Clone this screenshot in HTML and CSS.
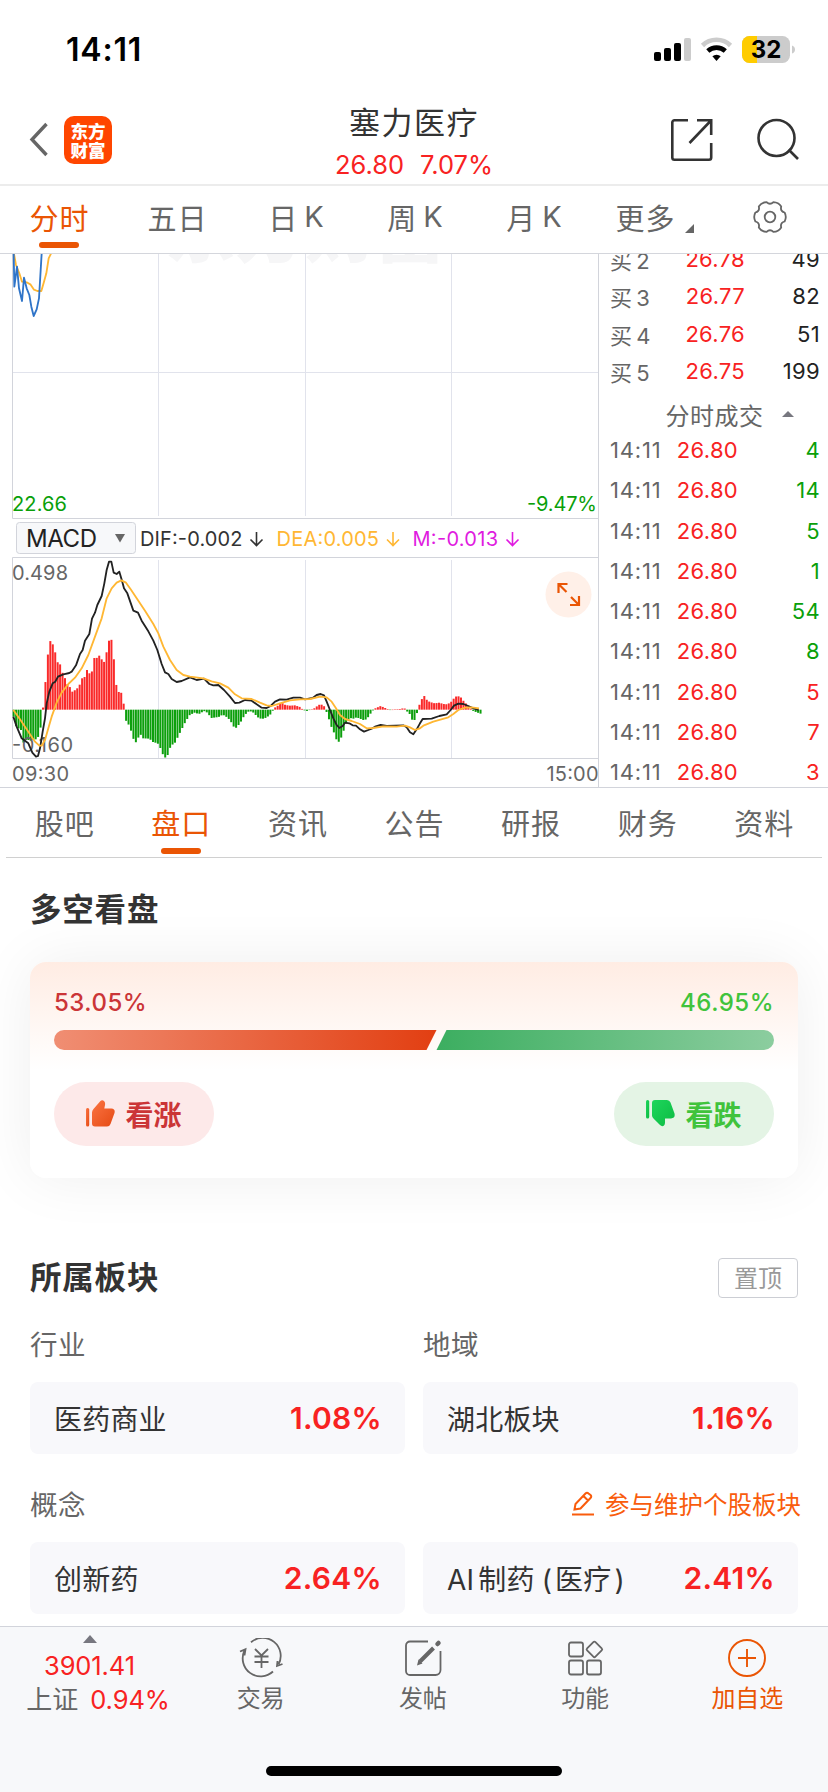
FILE: index.html
```html
<!DOCTYPE html>
<html lang="zh-CN">
<head>
<meta charset="utf-8">
<title>塞力医疗</title>
<link rel="stylesheet" href="styles.css">
</head>
<body>
<div class="screen">
  <div class="status">
    <span class="clock">14:11</span>
    <svg class="status-icons" width="146" height="30" viewBox="0 0 146 30">
      <rect x="1" y="16" width="7" height="9" rx="2"/><rect x="11" y="12" width="7" height="13" rx="2"/><rect x="21" y="7" width="7" height="18" rx="2"/><rect x="31" y="2" width="7" height="23" rx="2" fill="#ccc"/>
      <path d="M49.500 9.500a20 20 0 0 1 28 0" fill="none" stroke="#ccc" stroke-width="4.600"/>
      <path d="M54.800 15a13 13 0 0 1 17.500 0" fill="none" stroke="#000" stroke-width="4.600"/>
      <path d="M59.400 20.300a6 6 0 0 1 8.300 0L63.500 25z"/>
      <clipPath id="batt"><rect x="89" y="0" width="48" height="27" rx="7.500"/></clipPath>
      <g clip-path="url(#batt)"><rect x="89" width="48" height="27" fill="#ccc"/><rect x="89" width="15" height="27" fill="#fc0"/></g>
      <path d="M139 9.500q3 1 3 4t-3 4z" fill="#ccc"/>
      <text class="batt-text" x="113" y="22" text-anchor="middle">32</text>
    </svg>
  </div>

  <header class="header">
    <div class="head-left">
      <svg width="20" height="36" viewBox="0 0 20 36"><path d="M18.500 2 4 17.500 18.500 33" fill="none" stroke="#666" stroke-width="3.400"/></svg>
      <div class="logo"><span>东方</span><span>财富</span></div>
    </div>
    <div class="head-mid">
      <div class="name">塞力医疗</div>
      <div class="quote"><span>26.80</span><span>7.07%</span></div>
    </div>
    <div class="head-right">
      <svg width="44" height="44" viewBox="0 0 44 44" fill="none" stroke="#333" stroke-width="2.600"><path d="M18 2.300H4.500a2.200 2.200 0 0 0-2.200 2.200v35a2.200 2.200 0 0 0 2.200 2.200h34.500a2.200 2.200 0 0 0 2.200-2.200V25M27 2.300h14.200V17M41 2.500 19.500 25"/></svg>
      <svg width="44" height="44" viewBox="0 0 44 44" fill="none" stroke="#333" stroke-width="2.600"><circle cx="20.500" cy="20" r="18"/><path d="m32.500 31.500 9.500 9.500"/></svg>
    </div>
  </header>

  <nav class="periods">
    <span class="tab active">分时</span><span class="tab">五日</span><span class="tab">日<i>K</i></span><span class="tab">周<i>K</i></span><span class="tab">月<i>K</i></span>
    <span class="tab more">更多<svg width="9" height="9" viewBox="0 0 9 9"><path d="M9 0v9H0z" fill="#666"/></svg></span>
    <span class="tab gear"><svg width="34" height="34" viewBox="-17 -17 34 34" fill="none" stroke="#666" stroke-width="1.800" stroke-linejoin="round"><circle r="5.300"/><path d="M14.600-4.500Q17 0 14.600 4.500 10 5.750 11.200 10.400 8.500 14.700 3.400 14.900 0 11.500-3.400 14.900-8.500 14.700-11.200 10.400-10 5.750-14.600 4.500-17 0-14.600-4.500-10-5.750-11.200-10.400-8.500-14.700-3.400-14.900 0-11.500 3.400-14.900 8.500-14.700 11.200-10.400 10-5.750 14.600-4.500Z"/></svg></span>
  </nav>

  <section class="market">
    <div class="chart">
      <svg width="599" height="533" viewBox="0 254 599 533">
        <clipPath id="wm"><rect x="160" y="254" width="290" height="10"/></clipPath>
        <text class="watermark" x="165" y="257" textLength="280" clip-path="url(#wm)">东方财富</text>
        <path d="M158.500 254v262M305.500 254v262M451.500 254v262M13 372.500h585M158.500 560v198M305.500 560v198M451.500 560v198" stroke="#e1e3ec" fill="none"/>
        <path d="M12.500 254v264.500H598.500M12.500 758.500V557.500H598.500M12.500 758.500H598.500" stroke="#d2d4db" fill="none"/>
        <g transform="translate(0 240) scale(.33333)" fill="none" stroke-width="5.500" stroke-linejoin="round">
          <polyline stroke="#ffb733" points="42,42 48,75 58,100 66,125 80,127 92,134 102,149 112,153 124,153 132,125 139,100 146,55 153,41"/>
          <polyline stroke="#2f74c8" points="41,40 43,140 51,80 57,145 66,183 72,113 80,145 88,165 94,200 101,228 110,208 117,175 125,40"/>
        </g>
        <text class="label green" x="12" y="511" textLength="55">22.66</text>
        <text class="label green" x="527" y="511" textLength="70">-9.47%</text>

        <rect x="16.500" y="522.500" width="119" height="31" rx="3" fill="#f7f8fa" stroke="#d2d4db"/>
        <text class="macd" x="26" y="547" textLength="71">MACD</text>
        <path d="M115 534h10l-5 8.500z" fill="#666"/>
        <text class="label dark" x="140" y="546" textLength="102.500">DIF:-0.002</text>
        <text class="label amber" x="276.500" y="546" textLength="102.500">DEA:0.005</text>
        <text class="label violet" x="412.500" y="546" textLength="85.500">M:-0.013</text>
        <g fill="none" stroke-width="1.600">
          <path d="M256.500 532v13.500M250.500 539.500l6 6 6-6" stroke="#333"/>
          <path d="M393 532v13.500M387 539.500l6 6 6-6" stroke="#ffb733"/>
          <path d="M512.500 532v13.500M506.500 539.500l6 6 6-6" stroke="#e01be0"/>
        </g>

        <g id="bars"></g>
        <text class="label grey" x="12" y="580" textLength="56">0.498</text>
        <text class="label grey" x="12" y="752" textLength="61">-0.160</text>
        <g transform="translate(0 510) scale(.33333)" fill="none" stroke-width="5.500" stroke-linejoin="round">
          <polyline stroke="#222" points="40,620 50,650 65,685 85,700 97,728 108,740 114,738 120,715 128,665 135,625 140,580 148,545 158,520 166,515 174,500 190,493 208,489 215,485 228,466 240,432 248,420 255,392 268,372 276,326 285,308 292,285 305,258 313,220 320,180 327,155 334,155 341,188 350,192 358,185 366,212 372,235 382,250 400,302 414,308 425,332 445,364 460,392 472,420 485,462 495,487 505,492 515,507 530,516 545,513 570,502 590,510 612,506 628,522 640,526 655,525 672,540 690,560 705,579 718,578 735,570 755,572 770,583 785,593 800,594 812,588 825,575 840,568 860,569 880,563 900,563 915,568 938,564 950,555 962,552 972,556 980,575 990,600 1000,625 1010,645 1018,654 1028,648 1035,638 1048,640 1058,646 1068,647 1080,658 1092,665 1105,660 1115,656 1125,650 1142,645 1160,648 1210,646 1220,652 1230,667 1240,673 1250,658 1260,640 1268,627 1295,626 1318,618 1340,613 1352,600 1362,587 1375,581 1390,582 1405,588 1420,595 1436,600"/>
          <polyline stroke="#ffb733" points="40,600 60,628 85,665 105,695 118,707 125,707 135,690 145,655 155,620 170,578 185,548 205,522 225,503 245,475 265,435 285,380 305,325 320,265 335,235 350,218 364,211 378,218 392,238 410,265 435,302 460,342 475,370 490,410 510,450 530,480 550,495 570,500 610,505 635,514 660,520 685,533 705,553 725,565 755,567 780,578 800,586 815,588 840,580 870,571 900,568 930,567 960,560 980,562 995,575 1008,595 1020,615 1035,627 1055,633 1080,642 1100,655 1120,654 1150,649 1190,650 1215,647 1230,652 1245,660 1258,656 1270,647 1300,635 1345,622 1360,612 1375,600 1395,593 1415,592 1437,595"/>
        </g>
        <text class="label grey" x="12" y="780.500" textLength="57">09:30</text>
        <text class="label grey" x="546.500" y="780.500" textLength="52">15:00</text>
        <circle cx="568.500" cy="594.500" r="23" fill="#fff0e8"/>
        <path d="M558.500 593v-9h9M558.500 584l8 8M579 596v9h-9M579 605l-8-8" fill="none" stroke="#ea5504" stroke-width="2.200"/>
      </svg>
    </div>
    <aside class="book">
      <div class="bids">
        <div class="bid"><span>买<i>2</i></span><b>26.78</b><em>49</em></div>
        <div class="bid"><span>买<i>3</i></span><b>26.77</b><em>82</em></div>
        <div class="bid"><span>买<i>4</i></span><b>26.76</b><em>51</em></div>
        <div class="bid"><span>买<i>5</i></span><b>26.75</b><em>199</em></div>
      </div>
      <div class="ticks-head">分时成交<svg width="12" height="6" viewBox="0 0 12 6"><path d="M6 0l6 6H0z" fill="#77777f"/></svg></div>
      <div class="ticks">
        <div class="tick"><span>14:11</span><b>26.80</b><em class="down">4</em></div>
        <div class="tick"><span>14:11</span><b>26.80</b><em class="down">14</em></div>
        <div class="tick"><span>14:11</span><b>26.80</b><em class="down">5</em></div>
        <div class="tick"><span>14:11</span><b>26.80</b><em class="down">1</em></div>
        <div class="tick"><span>14:11</span><b>26.80</b><em class="down">54</em></div>
        <div class="tick"><span>14:11</span><b>26.80</b><em class="down">8</em></div>
        <div class="tick"><span>14:11</span><b>26.80</b><em class="up">5</em></div>
        <div class="tick"><span>14:11</span><b>26.80</b><em class="up">7</em></div>
        <div class="tick"><span>14:11</span><b>26.80</b><em class="up">3</em></div>
      </div>
    </aside>
  </section>

  <nav class="sections">
    <span class="tab">股吧</span><span class="tab active">盘口</span><span class="tab">资讯</span><span class="tab">公告</span><span class="tab">研报</span><span class="tab">财务</span><span class="tab">资料</span>
  </nav>

  <main class="content">
    <h2 class="title">多空看盘</h2>
    <div class="card">
      <div class="pcts"><span class="bull">53.05%</span><span class="bear">46.95%</span></div>
      <svg class="ratio" width="720" height="20" viewBox="0 0 720 20">
        <defs>
          <linearGradient id="gr"><stop stop-color="#f08e73"/><stop offset="1" stop-color="#e23f12"/></linearGradient>
          <linearGradient id="gg"><stop stop-color="#3cae60"/><stop offset="1" stop-color="#8ccd9f"/></linearGradient>
        </defs>
        <path d="M10 0H382.500L372.500 20H10A10 10 0 0 1 10 0z" fill="url(#gr)"/>
        <path d="M392.500 0H710a10 10 0 0 1 0 20H382.500z" fill="url(#gg)"/>
      </svg>
      <div class="votes">
        <div class="vote vote-up">
          <svg width="29" height="27" viewBox="0 0 29 27"><defs><linearGradient id="tu" x2="1" y2="1"><stop stop-color="#fb7443"/><stop offset="1" stop-color="#e54a14"/></linearGradient></defs><rect y="8" width="3.200" height="18.500" rx="1.500" fill="url(#tu)"/><path d="M6 12.500Q6 10.500 7.500 9L14 1.500Q16-.500 18 1 19.500 2.500 19 5L18.300 8.500H25.500Q29.500 9 28.500 13L24.500 24Q23.500 26.500 21 26.500H9Q6 26.500 6 23.500z" fill="url(#tu)"/></svg>
          <span>看涨</span>
        </div>
        <div class="vote vote-down">
          <svg width="29" height="27" viewBox="0 0 29 27"><defs><linearGradient id="td" x2="1" y2="1"><stop stop-color="#1ed65c"/><stop offset="1" stop-color="#0cbb42"/></linearGradient></defs><rect y="0" width="3.200" height="18.500" rx="1.500" fill="url(#td)"/><path d="M6 15.500Q6 17 7.500 18.500L14 25Q16 27 18 25.500 19 24.500 19 22.500V18.500H25Q29.500 18 28.500 13.500L24.500 2.500Q23.500 0 21 0H9Q6 0 6 3z" fill="url(#td)"/></svg>
          <span>看跌</span>
        </div>
      </div>
    </div>

    <div class="row-head"><h2 class="title">所属板块</h2><span class="pin">置顶</span></div>
    <div class="labels"><span>行业</span><span>地域</span></div>
    <div class="cells">
      <div class="cell"><span>医药商业</span><b>1.08%</b></div>
      <div class="cell"><span>湖北板块</span><b>1.16%</b></div>
    </div>
    <div class="labels concept"><span>概念</span>
      <span class="edit"><svg width="24" height="25" viewBox="0 0 24 25" fill="none" stroke="#f95c0c" stroke-width="2"><path d="M1 23.500h22M3.500 18.500 4.500 13 14.500 2.500Q16 1 17.500 2.500L19.500 4Q21 5.500 19.500 7L9.500 17.500zM12.500 5l4.500 4.500"/></svg>参与维护个股板块</span>
    </div>
    <div class="cells">
      <div class="cell"><span>创新药</span><b>2.64%</b></div>
      <div class="cell"><span><i class="latin">AI</i>制药<i class="paren">(</i>医疗<i class="paren-end">)</i></span><b>2.41%</b></div>
    </div>
  </main>

  <footer class="dock">
    <div class="dock-row">
      <div class="index">
        <svg width="14" height="8" viewBox="0 0 14 8"><path d="M7 0l7 8H0z" fill="#77777f"/></svg>
        <div class="index-val">3901.41</div>
        <div class="index-name"><span>上证</span><b>0.94%</b></div>
      </div>
      <div class="item">
        <svg width="44" height="40" viewBox="0 0 44 40" fill="none" stroke="#666" stroke-width="1.800"><path d="M12 4.200A18 18 0 0 1 39.500 26.500M34 33.500A18 18 0 0 1 5.500 12.500M1 13.500l5.500-2.200-1 6M43.500 26l-5.500 2 .500-5M16 11l6.500 6.500L29 11M22.500 17.500V30M15.500 18.500h14M15.500 24h14"/></svg>
        <span>交易</span>
      </div>
      <div class="item">
        <svg width="44" height="40" viewBox="0 0 44 40" fill="none" stroke="#666" stroke-width="1.800"><path d="M27 3.500H9a4 4 0 0 0-4 4V33a4 4 0 0 0 4 4h25.500a5 5 0 0 0 5-5V13"/><path d="M32.500 10 19 23.500" stroke-width="4"/><path d="M17.500 21.500l4 4-5.500 2z" fill="#666" stroke="none"/><path d="M36.500 6l1-1" stroke-width="4.500" stroke-linecap="round"/></svg>
        <span>发帖</span>
      </div>
      <div class="item">
        <svg width="44" height="40" viewBox="0 0 44 40" fill="none" stroke="#666" stroke-width="1.800"><rect x="6" y="4.500" width="14" height="14" rx="2"/><rect x="6" y="22.500" width="14" height="14" rx="2"/><rect x="24" y="22.500" width="14" height="14" rx="2"/><rect x="25.500" y="5.500" width="11.800" height="11.800" rx="1.500" transform="rotate(45 31.400 11.400)"/></svg>
        <span>功能</span>
      </div>
      <div class="item add">
        <svg width="44" height="40" viewBox="0 0 44 40" fill="none" stroke="#ea5504" stroke-width="1.900"><circle cx="22" cy="20" r="18"/><path d="M22 11v18M13 20h18"/></svg>
        <span>加自选</span>
      </div>
    </div>
    <div class="home"></div>
  </footer>
</div>
<script src="chart.js"></script>
</body>
</html>
```
FILE: styles.css
```css
* { box-sizing: border-box; }
body { margin: 0; background: #fff; font-family: Inter, "Noto Sans CJK SC", sans-serif; color: #333; }
i, em { font-style: normal; }
b { font-weight: 400; }
svg { display: block; flex: none; }
.screen { width: 828px; height: 1792px; display: flex; flex-direction: column; overflow: hidden; }

.status { height: 92px; display: flex; justify-content: space-between; align-items: flex-start; padding: 30px 29px 0 66px; flex: none; }
.clock { font-size: 32px; line-height: 40px; font-weight: 600; color: #000; letter-spacing: .800px; }
.status-icons { margin-top: 6px; }
.batt-text { font-size: 24px; font-weight: 700; }

.header { height: 94px; flex: none; display: grid; grid-template-columns: 280px 1fr 280px; border-bottom: 2px solid #ececec; }
.head-left { display: flex; align-items: flex-start; padding: 24px 0 0 28px; gap: 16px; }
.head-left > svg { margin-top: 6px; }
.logo { width: 48px; height: 48px; border-radius: 10px; background: #ff4600; color: #fff; display: flex; flex-direction: column; align-items: center; justify-content: center; font: 900 17.500px/19px "Noto Sans CJK SC", sans-serif; }
.head-mid { text-align: center; }
.name { font-size: 31px; line-height: 40px; margin-top: 11px; letter-spacing: 1.500px; }
.quote { display: flex; justify-content: center; gap: 16px; font-size: 25.500px; line-height: 30px; margin-top: 7px; color: #f82222; letter-spacing: 0; }
.head-right { display: flex; padding: 26px 28px 0 0; gap: 42px; justify-content: flex-end; }

.periods { height: 68px; flex: none; display: grid; grid-template-columns: 118px 118px 120px 118px 120px 118px 114px; border-bottom: 1px solid #d4d6dc; }
.tab { position: relative; display: flex; justify-content: center; align-items: center; font-size: 29px; color: #666; letter-spacing: 1px; padding-bottom: 4px; padding-left: 1px; }
.periods .tab { padding-bottom: 6px; }
.tab i { margin-left: 6px; }
.tab.active { color: #ea5504; }
.tab.active::after { content: ""; position: absolute; bottom: 5px; left: 50%; width: 40px; height: 6px; margin-left: -20px; border-radius: 3px; background: #ea5504; }
.more { padding-left: 3px; }
.more svg { align-self: flex-end; margin: 0 0 14px 9px; }

.market { height: 534px; flex: none; display: flex; border-bottom: 1px solid #d2d4db; overflow: hidden; }
.chart { width: 599px; border-right: 1px solid #d2d4db; flex: none; overflow: hidden; }
.label { font-size: 20px; }
.macd { font-size: 24px; fill: #222; }
.green { fill: #0a9f0a; } .dark { fill: #333; } .amber { fill: #ffb733; } .violet { fill: #e01be0; } .grey { fill: #666; }
.watermark { font: 900 70px "Noto Sans CJK SC", sans-serif; fill: #f6f6f7; }
.bar-up { fill: #fa2a2a; } .bar-down { fill: #0c9f0c; }

.book { flex: 1; padding: 0 8px 0 11px; overflow: hidden; }
.bids { margin-top: -14px; }
.bid, .tick { display: grid; font-size: 22px; letter-spacing: .300px; align-items: center; }
.bid { height: 37.500px; grid-template-columns: 50px 85px 1fr; }
.bid span { color: #666; } .bid i { margin-left: 4px; }
.bid b, .tick b { color: #f82222; text-align: right; }
.bid em, .tick em { text-align: right; color: #222; }
.ticks-head { height: 36px; margin-top: 6px; display: flex; justify-content: center; align-items: center; gap: 18px; font-size: 24px; color: #666; letter-spacing: .500px; padding-left: 29px; }
.tick { height: 40.250px; grid-template-columns: 50px 78px 1fr; color: #666; }
.tick span { letter-spacing: .800px; white-space: nowrap; }
.ticks { margin-top: -2px; }
.tick em.down { color: #0a9f0a; } .tick em.up { color: #f82222; }

.sections { height: 70px; flex: none; margin: 0 6px; display: grid; grid-template-columns: repeat(7, 1fr); border-bottom: 1px solid #d0d0d0; }
.sections .tab { padding-bottom: 2px; }
.sections .tab.active::after { bottom: 3px; }

.content { flex: 1; padding: 0 30px; }
.title { margin: 0; font-size: 31.500px; line-height: 40px; font-weight: 700; letter-spacing: .800px; }
.content > .title { padding-top: 32px; }
.card { height: 216px; margin-top: 32px; border-radius: 16px; padding: 24px; background: linear-gradient(#ffece3, #fff 50%); box-shadow: 0 0 60px rgba(0,0,0,.065); }
.pcts { display: flex; justify-content: space-between; font-size: 24px; line-height: 34px; font-weight: 500; letter-spacing: .500px; }
.bull { color: #cb3537; } .bear { color: #40c33c; }
.ratio { margin-top: 10px; }
.votes { display: flex; justify-content: space-between; margin-top: 32px; }
.vote { width: 160px; height: 64px; border-radius: 32px; display: flex; align-items: center; justify-content: center; gap: 10px; font-size: 28px; font-weight: 700; padding-bottom: 1px; }
.vote-up { background: #fde9e9; color: #cb3537; } .vote-down { background: #e4f4e5; color: #40c33c; }
.row-head { display: flex; justify-content: space-between; align-items: center; margin-top: 80px; }
.pin { width: 80px; height: 40px; border: 1px solid #ccced4; border-radius: 4px; font-size: 24px; line-height: 39px; text-align: center; color: #999; }
.labels { display: grid; grid-template-columns: 375px 375px; gap: 18px; height: 84px; align-items: center; font-size: 27.500px; color: #666; padding-top: 6px; letter-spacing: .500px; }
.concept { height: 88px; padding-top: 10px; }
.cells { display: grid; grid-template-columns: 375px 375px; gap: 18px; }
.cell { height: 72px; border-radius: 8px; background: #f8f8fb; padding: 0 24px 1px; display: flex; align-items: center; justify-content: space-between; font-size: 28px; letter-spacing: .200px; }
.cell b { font-size: 30px; font-weight: 600; color: #f82222; letter-spacing: .300px; margin-right: -1px; }
.latin { margin-right: 4px; }
.paren { margin-left: 7px; margin-right: 3px; } .paren-end { margin-left: 3px; }
.edit { display: flex; align-items: center; justify-content: flex-end; gap: 10px; font-size: 24.500px; color: #f95c0c; margin-right: -3px; letter-spacing: 0; white-space: nowrap; }

.dock { height: 166px; flex: none; background: #f7f8fa; border-top: 1px solid #d2d4db; display: flex; flex-direction: column; align-items: center; }
.dock-row { width: 828px; height: 139px; display: grid; grid-template-columns: 179px repeat(4, 162.250px); color: #666; font-size: 24px; }
.index { display: flex; flex-direction: column; align-items: center; padding-top: 8px; }
.index-val, .index-name b { font-size: 25.500px; color: #f82222; letter-spacing: -.100px; }
.index-val { line-height: 30px; margin-top: 8px; }
.index-name { display: flex; align-items: center; gap: 12px; line-height: 34px; margin: 2px 0 0 17px; font-size: 26px; }
.item { display: flex; flex-direction: column; align-items: center; padding: 11px 0 0 1px; }
.item span { line-height: 34px; margin-top: 4px; }
.item.add { color: #ea5504; }
.home { width: 296px; height: 10px; border-radius: 5px; background: #000; }
```
FILE: chart.js
```js
// MACD histogram: [x, value edge] in one-third pixel units, zero line at 599.
const points = [
  [41,620],[48,648],[55,655],[63,660],[70,698],[77,690],[85,690],[92,692],[99,690],[107,688],[114,682],[121,658],[128,603],
  [136,520],[143,438],[150,392],[158,402],[165,424],[172,456],[180,462],[187,487],[194,502],[202,522],[209,530],[217,545],
  [224,541],[231,536],[239,524],[246,505],[253,503],[261,480],[268,490],[275,488],[283,444],[290,444],[297,436],[305,448],
  [312,457],[319,430],[327,392],[334,387],[341,441],[349,525],[356,546],[363,545],[370,581],[374,581],[374.500,632],[378,632],[385,642],
  [393,662],[400,686],[407,698],[414,684],[422,674],[429,685],[448,686],[459,696],[473,700],[481,714],[488,732],[495,743],
  [502,738],[510,714],[517,704],[524,700],[532,684],[546,656],[554,640],[561,628],[568,616],[583,608],[597,612],[612,603],
  [622,608],[634,624],[656,621],[668,614],[676,618],[690,630],[705,657],[720,640],[734,615],[745,605],[756,604],[766,614],
  [776,624],[786,627],[796,624],[806,618],[816,609],[819,600],[823,594],[832,588],[845,578],[856,585],[870,587],[885,586],
  [900,591],[910,600],[920,603],[935,598],[945,594],[955,585],[963,583],[972,588],[979,604],[987,628],[994,650],[1002,668],
  [1009,688],[1017,696],[1025,680],[1033,656],[1041,633],[1050,624],[1060,626],[1070,622],[1080,626],[1090,630],[1100,628],
  [1108,616],[1118,602],[1126,595],[1142,588],[1160,596],[1170,600],[1185,598],[1200,597],[1213,594],[1220,603],[1229,612],
  [1236,629],[1244,630],[1252,606],[1258,585],[1265,568],[1273,558],[1282,572],[1290,576],[1304,580],[1318,578],[1330,582],
  [1342,583],[1353,576],[1361,566],[1370,558],[1381,560],[1390,572],[1400,583],[1412,596],[1420,603],[1430,607],[1442,611]
];
const zero = 599;
const group = document.getElementById("bars");
function valueAt(x) {
  for (let i = 1; i < points.length; i++) {
    const [x0, y0] = points[i - 1], [x1, y1] = points[i];
    if (x <= x1) return y0 + (y1 - y0) * Math.max(0, (x - x0) / (x1 - x0));
  }
  return zero;
}
for (let i = 0; i < 192; i++) {
  const x = 41 + i * 7.333;
  const y = valueAt(x);
  const bar = document.createElementNS("http://www.w3.org/2000/svg", "rect");
  bar.setAttribute("x", (x - 3) / 3);
  bar.setAttribute("width", 2);
  bar.setAttribute("y", 510 + Math.min(y, zero) / 3);
  bar.setAttribute("height", Math.max(0.4, Math.abs(y - zero) / 3));
  bar.setAttribute("class", y < zero ? "bar-up" : "bar-down");
  group.appendChild(bar);
}
```
